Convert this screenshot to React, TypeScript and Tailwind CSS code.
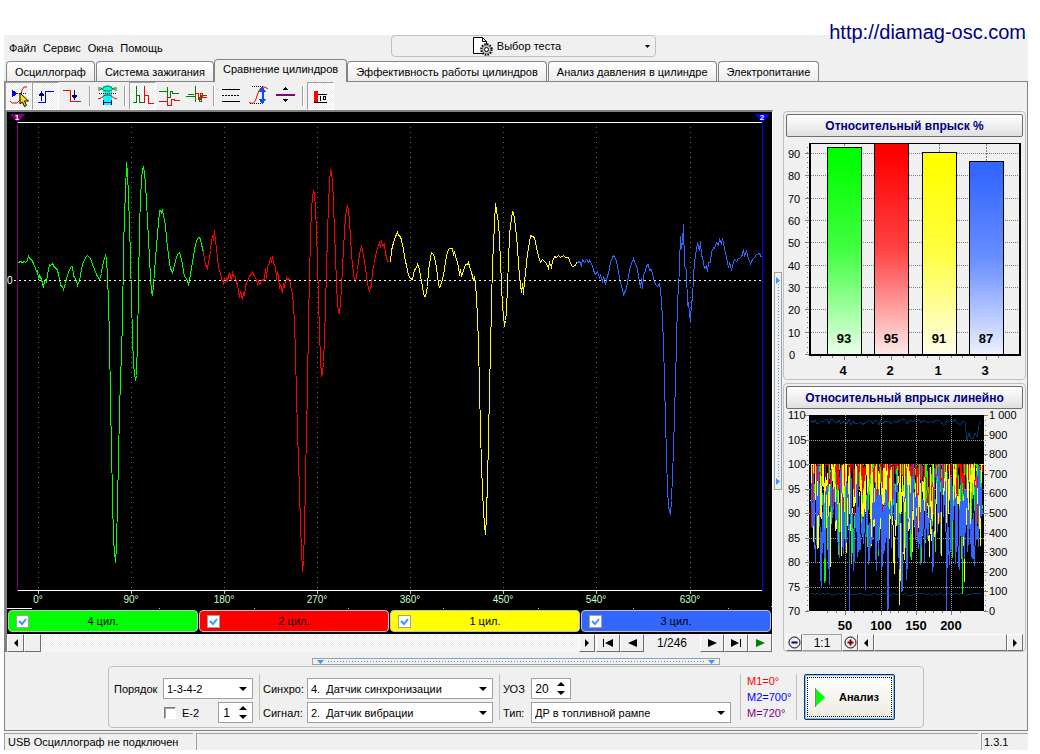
import { useState, type ReactNode } from 'react';
import clsx from 'clsx';

const TABS = [
    'Осциллограф',
    'Система зажигания',
    'Сравнение цилиндров',
    'Эффективность работы цилиндров',
    'Анализ давления в цилиндре',
    'Электропитание',
];

const CYLINDERS = [
    { id: 4, color: 'bg-[#00ff00]' },
    { id: 2, color: 'bg-[#ff0000]' },
    { id: 1, color: 'bg-[#ffff00]' },
    { id: 3, color: 'bg-[#3366ff]' },
];

// Signal traces in plot units, one per cylinder
const TRACES = [
    {
        color: '#00ff00',
        points:
            '18,262 20,261 22,262 24,261 25,262 27,260 28,256 29,258 31,259 33,263 35,268 36,271 37,270 38,279 39,275 41,279 43,287 44,280 45,279 46,281 47,275 48,269 49,264 50,265 52,263 54,267 56,268 57,270 58,274 60,284 61,286 62,286 63,289 64,286 65,283 67,275 69,269 71,266 72,266 73,275 74,277 76,280 77,285 79,280 80,275 81,269 82,264 84,259 86,256 87,255 89,257 90,258 92,264 94,269 96,274 97,276 99,279 101,273 102,265 104,258 105,255 106,258 107,277 108,301 109,339 110,400 111,450 112,495 113,540 115,562 116,545 117,500 118,460 119,410 120,380 121,352 122,320 123,252 124,212 125,193 126,162 127,173 128,196 129,225 130,257 131,300 132,335 133,365 135,380 136,375 137,340 138,290 139,225 140,200 141,177 142,170 143,166 144,173 145,183 147,220 149,257 150,277 151,291 152,295 153,285 155,258 157,233 158,223 159,210 160,210 161,212 162,210 163,215 165,225 166,238 168,255 169,262 170,268 172,272 174,265 176,256 178,253 179,252 181,259 183,270 184,276 186,278 188,284 189,280 190,273 192,262 194,249 196,240 198,237 200,238 201,244 202,248 203,252',
    },
    {
        color: '#ff0000',
        points:
            '203,251 204,259 205,264 207,268 208,262 209,257 210,250 211,240 212,235 213,240 214,230 215,240 216,248 217,257 218,267 220,273 221,278 223,283 224,277 225,282 226,278 227,280 229,272 230,276 231,280 232,271 233,276 235,276 236,282 237,284 238,291 239,297 240,291 242,299 243,292 244,295 245,286 246,282 248,279 249,275 251,274 252,272 254,276 256,279 257,284 258,281 259,284 261,281 262,279 264,280 265,268 266,278 267,266 269,263 270,257 271,262 272,256 273,263 275,266 276,279 277,271 278,275 279,288 280,284 282,292 283,284 284,286 286,277 287,279 289,278 290,285 292,293 293,306 294,322 295,354 296,395 297,430 299,490 300,525 301,550 302,571 303,560 304,530 305,480 306,430 307,390 308,320 309,278 310,236 311,208 312,197 313,191 314,193 315,207 316,232 317,260 318,300 319,331 320,359 321,375 322,373 323,361 324,338 325,306 326,270 327,233 328,204 329,182 330,170 331,172 332,180 333,202 334,232 335,255 336,284 337,302 338,312 339,313 340,303 341,287 342,267 343,249 344,230 345,217 346,209 347,205 348,210 349,220 350,236 351,255 352,264 353,272 354,280 355,281 357,270 358,260 360,249 361,246 362,249 364,261 366,275 367,284 369,291 370,286 371,286 372,270 374,263 375,255 377,248 379,242 380,247 381,240 382,246 384,243 385,253 387,261 388,261 389,262',
    },
    {
        color: '#ffff00',
        points:
            '390,262 391,250 393,242 395,236 397,232 398,235 400,236 401,240 403,249 405,261 406,265 408,275 410,278 412,279 414,269 416,268 417,264 418,266 419,269 420,276 422,286 423,293 424,296 425,296 426,292 427,286 428,270 430,257 431,252 433,254 435,261 437,275 438,284 439,287 440,286 441,282 443,275 445,261 447,251 449,248 452,248 453,254 454,252 456,259 458,266 459,275 460,269 461,276 463,270 465,264 467,264 468,262 469,266 471,272 473,280 474,276 475,282 476,298 477,317 478,344 479,387 480,430 481,465 482,490 483,510 484,525 485,534 486,515 487,480 488,440 489,389 490,349 491,306 492,262 493,245 494,223 495,203 496,209 497,218 498,221 499,240 500,260 501,285 502,305 503,315 504,326 505,320 506,311 507,285 508,260 509,235 510,225 512,211 513,212 515,226 517,247 518,264 520,285 521,292 522,283 523,294 524,280 525,273 526,262 527,253 529,242 530,235 532,236 534,237 536,247 538,256 540,262 542,259 545,262 546,263 548,268 549,262 551,267 552,261 554,256 556,257 558,255 560,257 563,255 565,257 568,257 570,263 572,266 575,265 576,262',
    },
    {
        color: '#3366ff',
        points:
            '577,262 579,261 581,265 582,259 584,262 586,259 588,262 589,260 590,262 592,265 593,270 595,274 597,271 599,277 600,275 602,281 603,276 605,284 607,275 608,273 610,262 612,257 613,255 615,258 617,265 619,278 621,285 623,294 625,290 626,287 627,282 629,269 631,263 633,258 634,262 636,265 638,275 640,287 641,278 642,288 643,275 645,270 646,265 648,264 649,270 651,269 653,278 655,284 657,286 659,283 660,290 661,300 662,320 663,343 664,380 665,420 666,455 667,490 668,505 669,511 670,514 671,500 672,475 673,450 674,415 675,380 676,345 677,300 678,290 679,265 680,236 681,248 682,241 683,224 684,265 686,270 687,305 688,303 690,322 691,300 692,300 693,275 694,262 695,255 697,242 699,250 700,241 701,255 702,257 704,268 706,265 707,271 708,262 710,262 711,252 713,247 714,248 716,242 718,245 719,238 721,244 722,238 724,248 726,257 728,267 729,262 731,269 733,262 734,259 736,261 738,258 741,257 743,249 744,255 746,251 748,258 750,263 752,259 754,257 756,254 759,253 761,257',
    },
];

const DEGREES = [
    { x: 38, label: '0°' },
    { x: 131, label: '90°' },
    { x: 224, label: '180°' },
    { x: 317, label: '270°' },
    { x: 410, label: '360°' },
    { x: 503, label: '450°' },
    { x: 596, label: '540°' },
    { x: 690, label: '630°' },
];

const BARS = [
    { x: 827, cyl: 4, value: 93, color: '#00ff00' },
    { x: 874, cyl: 2, value: 95, color: '#ff0000' },
    { x: 922, cyl: 1, value: 91, color: '#ffff00' },
    { x: 969, cyl: 3, value: 87, color: '#3366ff' },
];

const BEVEL = 'border border-t-white border-l-white border-r-[#6e6e6e] border-b-[#6e6e6e] bg-[#f0f0f0] flex items-center justify-center';
const HATCH = 'bg-[repeating-conic-gradient(#ffffff_0_25%,#ececec_0_50%)] bg-[length:2px_2px]';
const FIELD = 'h-[21px] border border-[#a0a0a0] bg-white text-black';

function random(seed: number) {
    let s = seed;
    return () => {
        s = (s * 1664525 + 1013904223) % 4294967296;
        return s / 4294967296;
    };
}

// Percent values per cycle for one cylinder, clipped at 100
function history(seed: number, mean: number, spread: number, spike: number) {
    const next = random(seed);
    const out: string[] = [];
    for (let i = 0; i < 246; i++) {
        let v = mean + (next() + next() - 1) * spread;
        if (next() < spike) v -= next() * 10 + 3;
        v = Math.max(70, Math.min(100, v));
        out.push(`${(811 + i * 0.7).toFixed(1)},${(464 + (100 - v) * 4.9).toFixed(0)}`);
    }
    return out.join(' ');
}

function ripple(seed: number, base: number, amp: number, dip: boolean) {
    const next = random(seed);
    const out: string[] = [];
    for (let x = 811; x < 983; x += 2) {
        const y = dip && x > 965 && x < 979 ? base + 11 + next() * 7 : base + (next() - 0.5) * amp;
        out.push(`${x},${Math.round(y)}`);
    }
    return out.join(' ');
}

const HISTORY = [
    { color: '#00ff00', points: history(11, 95, 16, 0.08) },
    { color: '#ff0000', points: history(37, 99, 13, 0.06) },
    { color: '#ffff00', points: history(59, 94, 14, 0.06) },
    { color: '#3366ff', points: history(83, 90, 14, 0.1) },
];

const AIR_HIGH = ripple(5, 422, 6, true);
const AIR_LOW = ripple(9, 594, 3, false);

function Arrow({ dir, className = 'text-black' }: { dir: 'left' | 'right' | 'down' | 'up'; className?: string }) {
    const d = { left: 'M6 0v8L2 4z', right: 'M2 0v8l4-4z', down: 'M0 2h8L4 6z', up: 'M0 6h8L4 2z' }[dir];
    return (
        <svg width="8" height="8" viewBox="0 0 8 8" className={className} aria-hidden="true">
            <path d={d} fill="currentColor" />
        </svg>
    );
}

function ToolButton({ label, pressed, children }: { label: string; pressed?: boolean; children: ReactNode }) {
    return (
        <button
            type="button"
            aria-label={label}
            aria-pressed={!!pressed}
            className={clsx('h-7 w-[27px] border', pressed ? `${HATCH} border-t-[#a0a0a0] border-l-[#a0a0a0] border-r-white border-b-white` : 'border-transparent')}
        >
            <svg viewBox="1 1 25 26" className="block size-full" fill="none" shapeRendering="crispEdges">
                {children}
            </svg>
        </button>
    );
}

function ToolSeparator() {
    return <div className="mx-[3px] my-1 w-0.5 border-l border-l-[#a0a0a0] border-r border-r-white" />;
}

function Toolbar() {
    return (
        <div className="flex h-7" role="toolbar">
            <ToolButton label="Синхронизация" pressed>
                <path d="M12 11.500h9" stroke="#0000ff" strokeDasharray="1 1" />
                <path d="M7 8v7l6-3.500z" fill="#0000ff" />
                <path d="M5 19l2 2h5l3-3 1-5 1-5 2-3h3" stroke="#e00000" shapeRendering="auto" />
                <path d="M15 11v11l2.500-2 2 4.500 2-1-2-4.500h4z" fill="#ffe000" stroke="#000" shapeRendering="auto" />
            </ToolButton>
            <ToolButton label="Передний фронт" pressed>
                <path d="M6 20.500h7.500v-11H22" stroke="#0000ff" />
                <path d="M9.500 12v7" stroke="#000080" strokeWidth="1" />
                <path d="M6.500 14h6L9.500 9z" fill="#000080" />
            </ToolButton>
            <ToolButton label="Задний фронт">
                <path d="M4 8.500h7v11h11" stroke="#ff0000" />
                <path d="M15.500 8v7" stroke="#000080" />
                <path d="M12.500 13h6l-3 5z" fill="#000080" />
            </ToolButton>
            <ToolSeparator />
            <ToolButton label="Интервал">
                <path d="M9 4h9v19H9z" fill="#00ffff" />
                <path d="M4 8h2l3-2 3-2h3l3 2 3 2h2" stroke="#008000" shapeRendering="auto" />
                <path d="M4 6h3l4 3h5l4-3h3" stroke="#008000" shapeRendering="auto" />
                <path d="M5 11.500h18" stroke="#000" strokeDasharray="1 1" />
                <path d="M4 17l3-1 4-3h5l4 3 3 1" stroke="#e00000" shapeRendering="auto" />
                <path d="M9 20.500h9M9.500 18v5M17.500 18v5" stroke="#000080" />
            </ToolButton>
            <ToolSeparator />
            <ToolButton label="Последовательно" pressed>
                <path d="M4 20.500h3.500V4M7.500 13.500h3v7h4" stroke="#008000" />
                <path d="M15.500 4v17M15.500 13.500h4v8h5" stroke="#ff0000" />
            </ToolButton>
            <ToolButton label="Раздельно">
                <path d="M3 9.500h8.500v-5M11.500 9.500v6h3v-6h2v2h6" stroke="#008000" />
                <path d="M3 19.500h8.500v-6M11.500 19.500v4h4v-6h3v1h5" stroke="#ff0000" />
            </ToolButton>
            <ToolButton label="Наложение">
                <path d="M3 14.500h9.500v-11M12.500 12v8" stroke="#008000" />
                <path d="M5 12.500h6M16.500 14.500v5h2v-6h5" stroke="#008000" />
                <path d="M12 11.500h3.500v6h2v-6h2v4h4" stroke="#ff0000" />
            </ToolButton>
            <ToolSeparator />
            <ToolButton label="Линии">
                <path d="M4 7.500h18M4 19.500h18" stroke="#000" />
                <path d="M4 13.500h18" stroke="#000" strokeDasharray="2 1" />
            </ToolButton>
            <ToolButton label="Масштаб">
                <path d="M7 4.500h11M5 21.500h13" stroke="#000" strokeDasharray="1 1" />
                <path d="M4 20c4 3 6 1 8-6s5-12 11-7" stroke="#e00000" shapeRendering="auto" />
                <path d="M17.500 8v12" stroke="#0050ff" strokeWidth="2" />
                <path d="M13.500 10h8l-4-5zM13.500 17h8l-4 5z" fill="#0050ff" />
            </ToolButton>
            <ToolButton label="Центр">
                <path d="M4 13h19" stroke="#800080" strokeWidth="2" />
                <path d="M10.500 8h6l-3-3zM10.500 17h6l-3 3z" fill="#000" />
            </ToolButton>
            <ToolSeparator />
            <ToolButton label="Диаграмма" pressed>
                <path d="M7 9h4v11H7z" fill="#ff0000" />
                <path d="M7 20.500h13M11 12.500h9" stroke="#000" />
                <path d="M12.500 14.500h1v4M16.500 14.500h2v3h-2z" stroke="#000" />
            </ToolButton>
        </div>
    );
}

function Scope() {
    return (
        <svg viewBox="7 112 765 498" className="block h-auto w-full" shapeRendering="crispEdges" role="img" aria-label="Сравнение цилиндров">
            {DEGREES.map(d => (
                <g key={d.label}>
                    <path d={`M${d.x + 0.5} 127V589`} stroke="#606060" strokeDasharray="1 4" />
                    <path d={`M${d.x + 0.5} 591v3`} stroke="#c0c0c0" />
                    <text x={d.x} y="603" textAnchor="middle" fill="#c8ffc8" className="text-[10px]">
                        {d.label}
                    </text>
                </g>
            ))}
            <path d="M18 122.500H762M18 590.500H762M7 608.500H32" stroke="#fff" />
            <path d="M159 608.500h1M254 608.500h1M348 608.500h1M443 608.500h1M538 608.500h1M633 608.500h1M728 608.500h1M771 606.500h1" stroke="#c0c0c0" />
            <path d="M17.500 114V591" stroke="#800080" />
            {TRACES.map(t => (
                <polyline key={t.color} points={t.points} transform="translate(0.5 0.5)" fill="none" stroke={t.color} />
            ))}
            <path d="M14 280.500H761" stroke="#fff" strokeDasharray="2 3" />
            <text x="7" y="284" fill="#fff" className="text-[10px]">0</text>
            <path d="M762.500 114V591" stroke="#0000ff" />
            <path d="M10 114h15l-7.500 8z" fill="#800080" />
            <path d="M755 114h15l-7.500 8z" fill="#0000ff" />
            <text x="17" y="120" textAnchor="middle" fill="#fff" className="text-[8px] font-bold">1</text>
            <text x="762" y="120" textAnchor="middle" fill="#fff" className="text-[8px] font-bold">2</text>
        </svg>
    );
}

function BarChart() {
    const y = (v: number) => Math.round(355 - v * 2.235);
    return (
        <svg viewBox="786 137 237 242" className="block h-auto w-full" shapeRendering="crispEdges" role="img" aria-label="Относительный впрыск %">
            <defs>
                {BARS.map(b => (
                    <linearGradient key={b.cyl} id={`bar${b.cyl}`} x1="0" y1="0" x2="0" y2="1">
                        <stop offset="0.050" stopColor={b.color} />
                        <stop offset="0.500" stopColor={b.color} stopOpacity="0.740" />
                        <stop offset="1" stopColor={b.color} stopOpacity="0.080" />
                    </linearGradient>
                ))}
            </defs>
            {[0, 10, 20, 30, 40, 50, 60, 70, 80, 90].map(v => (
                <g key={v}>
                    <path d={`M811 ${y(v) - 0.5}H1019`} stroke="#808080" strokeDasharray="1 1" />
                    <path d={`M805 ${y(v) - 0.5}h4`} stroke="#808080" />
                    <text x={v ? 788 : 789} y={y(v) + 4} className="text-[11px]">{v}</text>
                </g>
            ))}
            <path d="M807.500 147V355" stroke="#808080" strokeWidth="1" strokeDasharray="1 4" />
            {BARS.map(b => {
                const top = b.value === 95 ? 143 : y(b.value);
                return (
                    <g key={b.cyl}>
                        <path d={`M${b.x + 17.5} 144V${top}`} stroke="#808080" strokeDasharray="2 1" />
                        <rect x={b.x} y={top} width="35" height={355 - top} fill="#fff" />
                        <rect x={b.x + 0.5} y={top + 0.5} width="34" height={355 - top} fill={`url(#bar${b.cyl})`} stroke="#000" />
                        <path d={`M${b.x + 17.5} 356v4M${b.x + 5.5} 356v2M${b.x + 29.5} 356v2M${b.x - 6.5} 356v2`} stroke="#808080" />
                        <text x={b.x + 17} y="343" textAnchor="middle" className="text-[13px] font-bold">{b.value}</text>
                        <text x={b.x + 16} y="375" textAnchor="middle" className="text-[13px] font-bold">{b.cyl}</text>
                    </g>
                );
            })}
            <path d="M809 143.500H1021" stroke="#000" />
            <path d="M810 143V356M1020 143V356M809 355H1021" stroke="#000" strokeWidth="2" />
        </svg>
    );
}

function LineChart() {
    return (
        <svg viewBox="786 409 237 225" className="block h-auto w-full" shapeRendering="crispEdges" role="img" aria-label="Относительный впрыск линейно">
            <rect x="809" y="415" width="175" height="196" fill="#000" />
            {[110, 105, 100, 95, 90, 85, 80, 75, 70].map((v, i) => {
                const y = Math.round(415 + i * 24.5);
                return (
                    <g key={v}>
                        {i > 0 && i < 8 && <path d={`M809 ${y + 0.5}h175`} stroke="#a0a0a0" strokeDasharray="1 1" />}
                        <path d={`M805 ${y + 0.5}h4`} stroke="#808080" />
                        <text x="788" y={y + 4} className="text-[11px]">{v}</text>
                    </g>
                );
            })}
            {['1 000', '900', '800', '700', '600', '500', '400', '300', '200', '100', '0'].map((v, i) => {
                const y = Math.round(415 + i * 19.6);
                return (
                    <g key={v}>
                        <path d={`M984 ${y + 0.5}h4`} stroke="#808080" />
                        <text x="989" y={y + 4} className="text-[11px]">{v}</text>
                    </g>
                );
            })}
            <path d="M807.500 420V611M985.500 420V611" stroke="#808080" strokeDasharray="1 4" />
            {[50, 100, 150, 200].map(v => {
                const x = Math.round(810 + v * 0.705);
                return (
                    <g key={v}>
                        <path d={`M${x + 0.5} 415v196`} stroke="#a0a0a0" strokeDasharray="1 1" />
                        <path d={`M${x + 0.5} 611v4M${x - 8.5} 611v2M${x - 17.5} 611v2M${x + 9.5} 611v2`} stroke="#808080" />
                        <text x={x} y="630" textAnchor="middle" className="text-[13px] font-bold">{v}</text>
                    </g>
                );
            })}
            <polyline points={AIR_HIGH} fill="none" stroke="#003366" />
            <polyline points={AIR_LOW} fill="none" stroke="#003366" />
            {HISTORY.map(h => (
                <polyline key={h.color} points={h.points} fill="none" stroke={h.color} />
            ))}
        </svg>
    );
}

function ChartPanel({ title, children }: { title: string; children: ReactNode }) {
    return (
        <section className="rounded border border-[#c0c0c0] px-0.5 pt-0.5">
            <h2>
                <button
                    type="button"
                    className="h-[23px] w-full rounded-xs border border-[#6e6e6e] bg-gradient-to-b from-white to-[#e0e0e0] text-center text-[12px] leading-5 font-bold text-[#000080]"
                >
                    {title}
                </button>
            </h2>
            {children}
        </section>
    );
}

function Select({ id, value, className }: { id: string; value: string; className: string }) {
    return (
        <div className={clsx('relative', className)}>
            <select id={id} defaultValue={value} className={`${FIELD} w-full appearance-none pr-5 pl-[3px] whitespace-pre`}>
                <option>{value}</option>
            </select>
            <span className="pointer-events-none absolute top-[7px] right-1.5">
                <Arrow dir="down" />
            </span>
        </div>
    );
}

function Spin({ label, value, className }: { label: string; value: string; className: string }) {
    return (
        <div className={clsx(FIELD, 'flex items-center', className)}>
            <input id={label} aria-label={label} defaultValue={value} className="w-full min-w-0 flex-1 text-center text-[12px] outline-none" />
            <div className="flex w-[18px] flex-col items-center">
                <button type="button" aria-label="Больше" className="h-[9px]"><Arrow dir="up" /></button>
                <button type="button" aria-label="Меньше" className="h-[9px]"><Arrow dir="down" /></button>
            </div>
        </div>
    );
}

function Divider() {
    return <div className="my-[7px] w-px bg-[#c0c0c0]" />;
}

export default function App() {
    const [tab, setTab] = useState(2);

    return (
        <div className="relative min-h-screen bg-white pt-[35px] pr-3 pl-1 font-['Liberation_Sans',sans-serif] text-[11px] leading-4 text-black">
            <a href="http://diamag-osc.com" className="absolute top-5 right-3.5 text-[20px] leading-6 text-[#000080]">
                http://diamag-osc.com
            </a>

            <div className="bg-[#f0f0f0]">
                <header className="relative flex h-6 justify-center">
                    <nav className="absolute top-[5px] left-[5px] flex gap-[7px]">
                        {['Файл', 'Сервис', 'Окна', 'Помощь'].map(item => (
                            <button key={item} type="button">{item}</button>
                        ))}
                    </nav>
                    <button type="button" className="ml-3.5 flex h-[22px] w-[265px] items-center rounded border border-[#c0c0c0] px-[5px]">
                        <span className="flex flex-1 items-center justify-center gap-1 pr-2">
                            <svg width="21" height="20" viewBox="0 0 21 20" fill="none">
                                <path d="M1.500 1.500h9l4 4v12h-13z" fill="#fff" stroke="#000" />
                                <path d="M10.500 1.500v4h4" stroke="#000" />
                                <circle cx="14.500" cy="13.500" r="5" fill="#c8d8c8" stroke="#000" strokeWidth="2.500" strokeDasharray="1.500 1.100" />
                                <circle cx="14.500" cy="13.500" r="4.200" fill="#c0d0c0" stroke="#606060" strokeWidth="0.600" />
                                <circle cx="14.500" cy="13.500" r="2" fill="#fff" stroke="#000" />
                            </svg>
                            Выбор теста
                        </span>
                        <svg width="5" height="3" viewBox="0 0 5 3"><path d="M0 0h5L2.500 3z" fill="#000" /></svg>
                    </button>
                </header>

                <div className="flex h-[22px] items-end gap-px pl-0.5" role="tablist">
                    {TABS.map((name, i) => (
                        <button
                            key={name}
                            type="button"
                            role="tab"
                            aria-selected={tab === i}
                            onClick={() => setTab(i)}
                            className={clsx(
                                'rounded-t border border-b-0 border-[#848484] px-2 whitespace-nowrap',
                                tab === i ? 'relative -mx-px -mb-px h-[23px] bg-[#f0f0f0] pb-1' : 'h-5 bg-gradient-to-b from-white to-[#ececec]'
                            )}
                        >
                            {name}
                        </button>
                    ))}
                </div>

                <main className="border border-[#848484]">
                    <Toolbar />

                    <div className="flex">
                        <div className="min-w-0 flex-1 border-t-2 border-r border-l-2 border-t-[#808080] border-r-white border-l-[#808080]">
                            <div className="bg-black">
                                <Scope />
                                <div className="flex gap-px px-px pb-0.5">
                                    {CYLINDERS.map(c => (
                                        <label key={c.id} className={clsx('flex h-[22px] flex-1 items-center rounded border border-[#c0c0c0] pl-[7px]', c.color)}>
                                            <span className="relative flex">
                                                <input type="checkbox" defaultChecked className="peer size-[13px] appearance-none border border-[#a0a0a0] bg-white" />
                                                <svg viewBox="0 0 13 13" className="pointer-events-none absolute inset-0 hidden peer-checked:block" fill="none">
                                                    <path d="M3 6l3 3 4-5" stroke="#3399ff" strokeWidth="2" />
                                                </svg>
                                            </span>
                                            <span className="flex-1 pr-5 text-center">{c.id} цил.</span>
                                        </label>
                                    ))}
                                </div>
                            </div>
                            <div className="flex h-[18px] bg-[#f0f0f0]">
                                <button type="button" aria-label="Влево" className={`${BEVEL} w-[17px]`}><Arrow dir="left" /></button>
                                <div className={`${BEVEL} w-[17px]`} />
                                <div className={`${HATCH} flex-1`} />
                                <button type="button" aria-label="Вправо" className={`${BEVEL} w-4`}><Arrow dir="right" /></button>
                                <button type="button" aria-label="В начало" className={`${BEVEL} ml-px w-6`}>
                                    <svg width="12" height="8" viewBox="0 0 12 8"><path d="M1 0h1v8H1zM11 0v8L3 4z" /></svg>
                                </button>
                                <button type="button" aria-label="Назад" className={`${BEVEL} w-6`}>
                                    <svg width="9" height="8" viewBox="0 0 9 8"><path d="M9 0v8L0 4z" /></svg>
                                </button>
                                <span className="w-14 text-center text-[12px] leading-[18px]">1/246</span>
                                <button type="button" aria-label="Вперёд" className={`${BEVEL} w-6`}>
                                    <svg width="9" height="8" viewBox="0 0 9 8"><path d="M0 0v8l9-4z" /></svg>
                                </button>
                                <button type="button" aria-label="В конец" className={`${BEVEL} w-6`}>
                                    <svg width="12" height="8" viewBox="0 0 12 8"><path d="M10 0h1v8h-1zM1 0v8l8-4z" /></svg>
                                </button>
                                <button type="button" aria-label="Воспроизвести" className={`${BEVEL} w-6`}>
                                    <svg width="9" height="8" viewBox="0 0 9 8"><path d="M0 0v8l9-4z" fill="#008000" /></svg>
                                </button>
                            </div>
                        </div>

                        <div className="flex w-2.5 items-center justify-center">
                            <div className="flex h-[218px] w-2 flex-col items-center justify-between border border-[#a0a0a0] py-1">
                                <svg width="4" height="7" viewBox="0 0 4 7"><path d="M0 0v7l4-3.500z" fill="#3399ff" /></svg>
                                <div className="w-px flex-1 bg-[repeating-linear-gradient(to_bottom,#3399ff_0_1px,transparent_1px_3px)]" />
                                <svg width="4" height="7" viewBox="0 0 4 7"><path d="M0 0v7l4-3.500z" fill="#3399ff" /></svg>
                            </div>
                        </div>

                        <aside className="flex w-[244px] flex-col gap-[3px] pt-px pr-px">
                            <ChartPanel title="Относительный впрыск %">
                                <BarChart />
                            </ChartPanel>
                            <ChartPanel title="Относительный впрыск линейно">
                                <LineChart />
                                <div className="flex h-[17px]">
                                    <button type="button" aria-label="Уменьшить" className={`${BEVEL} w-4`}>
                                        <svg width="13" height="13" viewBox="0 0 13 13" fill="none">
                                            <circle cx="6.500" cy="6.500" r="5.500" stroke="#000" />
                                            <path d="M3.500 6.500h6" stroke="#000080" strokeWidth="2" />
                                        </svg>
                                    </button>
                                    <span className="w-10 border border-t-[#a0a0a0] border-r-[#a0a0a0] border-b-[#a0a0a0] border-l-white text-center text-[12px] leading-4">1:1</span>
                                    <button type="button" aria-label="Увеличить" className={`${BEVEL} w-4`}>
                                        <svg width="13" height="13" viewBox="0 0 13 13" fill="none">
                                            <circle cx="6.500" cy="6.500" r="5.500" stroke="#000" />
                                            <path d="M3.500 6.500h6M6.500 3.500v6" stroke="#800000" strokeWidth="2" />
                                        </svg>
                                    </button>
                                    <button type="button" aria-label="Влево" className={`${BEVEL} w-4`}><Arrow dir="left" /></button>
                                    <div className={`${BEVEL} flex-1`} />
                                    <button type="button" aria-label="Вправо" className={`${BEVEL} w-4`}><Arrow dir="right" /></button>
                                </div>
                            </ChartPanel>
                        </aside>
                    </div>

                    <div className="mx-auto mt-[6px] flex h-[7px] w-[408px] items-center border border-[#a0a0a0] px-1">
                        <svg width="7" height="4" viewBox="0 0 7 4"><path d="M0 0h7L3.500 4z" fill="#3399ff" /></svg>
                        <div className="mx-1 h-px flex-1 bg-[repeating-linear-gradient(to_right,#3399ff_0_1px,transparent_1px_3px)]" />
                        <svg width="7" height="4" viewBox="0 0 7 4"><path d="M0 0h7L3.500 4z" fill="#3399ff" /></svg>
                    </div>

                    <form className="mx-auto mt-px mb-0.5 flex h-[62px] w-fit rounded border border-[#c0c0c0]" onSubmit={e => e.preventDefault()}>
                        <div className="flex flex-col gap-[3px] py-[11px] pr-1.5 pl-[5px]">
                            <div className="flex items-center">
                                <label htmlFor="order" className="w-[49px]">Порядок</label>
                                <Select id="order" value="1-3-4-2" className="w-[90px]" />
                            </div>
                            <div className="flex items-center pl-[50px]">
                                <input id="e2" type="checkbox" className="size-3 appearance-none border border-t-[#808080] border-r-white border-b-white border-l-[#808080] bg-white shadow-[inset_1px_1px_0_#a0a0a0]" />
                                <label htmlFor="e2" className="flex-1 pl-1.5">E-2</label>
                                <Spin label="Цилиндр" value="1" className="w-[35px]" />
                            </div>
                        </div>
                        <Divider />
                        <div className="flex flex-col gap-[3px] py-[11px] pr-1.5 pl-[3px]">
                            <div className="flex items-center">
                                <label htmlFor="sync" className="w-11">Синхро:</label>
                                <Select id="sync" value={'4.\u00a0 Датчик синхронизации'} className="w-[186px]" />
                            </div>
                            <div className="flex items-center">
                                <label htmlFor="signal" className="w-11">Сигнал:</label>
                                <Select id="signal" value={'2.\u00a0 Датчик вибрации'} className="w-[186px]" />
                            </div>
                        </div>
                        <Divider />
                        <div className="flex flex-col gap-[3px] py-[11px] pr-[9px] pl-[3px]">
                            <div className="flex items-center">
                                <label htmlFor="УОЗ" className="w-7">УОЗ</label>
                                <Spin label="УОЗ" value="20" className="w-10" />
                            </div>
                            <div className="flex items-center">
                                <label htmlFor="kind" className="w-7">Тип:</label>
                                <Select id="kind" value="ДР в топливной рампе" className="w-[200px]" />
                            </div>
                        </div>
                        <Divider />
                        <div className="flex w-[55px] flex-col pt-1.5 pl-1.5 whitespace-nowrap">
                            <span className="text-[#ff0000]">M1=0°</span>
                            <span className="text-[#0000ff]">M2=700°</span>
                            <span className="text-[#800080]">M=720°</span>
                        </div>
                        <Divider />
                        <button
                            type="submit"
                            className="relative mr-7 ml-[7px] my-[7px] flex w-[91px] items-center gap-3.5 rounded-xs border border-[#003c74] bg-gradient-to-b from-white to-[#ebebe0] pl-2.5 font-bold shadow-[inset_0_0_0_1px_#90b8e8]"
                        >
                            <span className="absolute inset-0.5 border border-dotted border-black" />
                            <svg width="10" height="19" viewBox="0 0 10 19"><path d="M0 0v19l10-9.500z" fill="#00ff00" /><path d="M0.500 0v19" stroke="#808080" /></svg>
                            Анализ
                        </button>
                    </form>
                </main>

                <footer className="flex gap-[3px] pt-0.5">
                    <div className="h-[17px] w-[189px] border-t border-l border-[#a0a0a0] pl-[3px]">USB Осциллограф не подключен</div>
                    <div className="h-[17px] flex-1 border-t border-l border-[#a0a0a0]" />
                    <div className="h-[17px] w-[47px] border-t border-l border-[#a0a0a0] pl-0.5">1.3.1</div>
                </footer>
            </div>
        </div>
    );
}
